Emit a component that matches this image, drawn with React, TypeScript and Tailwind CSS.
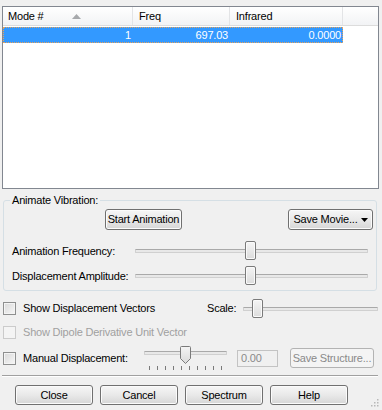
const font = "font-['Liberation_Sans',Arial,sans-serif]";

const btn =
  'flex items-center justify-center rounded-[3px] border border-[#707070] bg-linear-to-b from-[#f6f6f6] via-[#e9e9e9] to-[#d6d6d6] shadow-[inset_0_0_0_1px_#fbfbfb] text-black';
const btnDisabled =
  'flex items-center justify-center rounded-[3px] border border-[#b3b3b3] bg-[#f4f4f4] text-[#8a8a8a]';

const Checkbox = ({ disabled }: { disabled?: boolean }) => (
  <div
    className={
      disabled
        ? 'w-[13px] h-[13px] shrink-0 border border-[#cbcbcb] bg-[#f4f4f4]'
        : 'w-[13px] h-[13px] shrink-0 border border-[#8e8f8f] bg-linear-to-br from-[#d9d9d9] to-[#f7f7f7] shadow-[inset_0_0_0_1px_#f4f4f4]'
    }
  />
);

const Thumb = () => (
  <div className="absolute top-0 w-[11px] h-[19px] rounded-[2px] border border-[#7a7a7a] bg-linear-to-b from-[#f5f5f5] to-[#dcdcdc] shadow-[inset_0_0_0_1px_#fafafa]" />
);

const Track = () => (
  <div className="absolute left-0 right-0 top-[8px] h-[4px] border border-[#d0d0d0] border-t-[#a9a9a9] bg-[#e8e8e8] rounded-[1px]" />
);

const Slider = ({ width, thumb }: { width: number; thumb: number }) => (
  <div className="relative h-[19px] shrink-0" style={{ width }}>
    <Track />
    <div className="absolute top-0" style={{ left: thumb }}>
      <Thumb />
    </div>
  </div>
);

export default function App() {
  return (
    <div className={`relative w-[382px] h-[410px] bg-[#f0f0f0] flex flex-col text-[11px] leading-[13px] tracking-[-0.2px] text-black overflow-hidden ${font}`}>
      {/* Modes list */}
      <div className="ml-[2px] mt-[6px] w-[377px] h-[183px] shrink-0 border border-[#828790] bg-white flex flex-col">
        <div className="h-[19px] flex border-b border-[#dcdcdc] bg-linear-to-b from-white to-[#f2f3f5]">
          <div className="w-[130px] border-r border-[#e3e4e6] flex items-center pl-[5px]">
            <span>Mode #</span>
            <svg className="ml-[28px]" width="9" height="5" viewBox="0 0 9 5">
              <path d="M0 5 L4.5 0 L9 5 Z" fill="#a7a9ac" />
            </svg>
          </div>
          <div className="w-[97px] border-r border-[#e3e4e6] flex items-center pl-[6px]">Freq</div>
          <div className="w-[113px] border-r border-[#e3e4e6] flex items-center pl-[6px]">Infrared</div>
          <div className="flex-1" />
        </div>
        <div className="mt-[1px] h-[16px] w-[340px] bg-[#3399ff] text-white flex items-center border border-dotted border-[#e8a25a]">
          <div className="w-[129px] text-right pr-[2px]">1</div>
          <div className="w-[97px] text-right pr-[2px]">697.03</div>
          <div className="w-[112px] text-right pr-[1px]">0.0000</div>
        </div>
      </div>

      {/* Animate Vibration group */}
      <div className="relative ml-[3px] mt-[11px] w-[374px] h-[91px] shrink-0 border border-[#d5dfe5] rounded-[3px] flex flex-col">
        <span className="absolute -top-[7px] left-[6px] px-[2px] bg-[#f0f0f0]">Animate Vibration:</span>
        <div className="mt-[8px] h-[21px] flex">
          <div className={`${btn} ml-[101px] w-[77px]`}>Start Animation</div>
          <div className={`${btn} ml-auto mr-[3px] w-[85px] gap-[3px]`}>
            <span>Save Movie...</span>
            <svg width="7" height="4" viewBox="0 0 7 4">
              <path d="M0 0 L7 0 L3.5 4 Z" fill="#000" />
            </svg>
          </div>
        </div>
        <div className="mt-[11px] h-[19px] flex items-center">
          <span className="w-[131px] pl-[8px] pt-[1px]">Animation Frequency:</span>
          <Slider width={233} thumb={110} />
        </div>
        <div className="mt-[6px] h-[19px] flex items-center">
          <span className="w-[131px] pl-[8px] pt-[1px]">Displacement Amplitude:</span>
          <Slider width={233} thumb={110} />
        </div>
      </div>

      {/* Options */}
      <div className="mt-[8px] h-[19px] flex items-center">
        <div className="ml-[3px]">
          <Checkbox />
        </div>
        <span className="ml-[7px] w-[184px]">Show Displacement Vectors</span>
        <span className="w-[36px]">Scale:</span>
        <Slider width={135} thumb={9} />
      </div>

      <div className="mt-[8px] h-[13px] flex items-center">
        <div className="ml-[3px]">
          <Checkbox disabled />
        </div>
        <span className="ml-[7px] text-[#a0a0a0]">Show Dipole Derivative Unit Vector</span>
      </div>

      <div className="mt-[7px] h-[26px] flex items-start">
        <div className="ml-[3px] mt-[6px]">
          <Checkbox />
        </div>
        <span className="ml-[7px] mt-[6px] w-[121px]">Manual Displacement:</span>
        <div className="relative w-[83px] h-[26px] shrink-0">
          <div className="absolute left-0 right-0 top-[5px] h-[4px] border border-[#d0d0d0] border-t-[#a9a9a9] bg-[#e8e8e8] rounded-[1px]" />
          <svg className="absolute top-0 left-[36px]" width="11" height="18" viewBox="0 0 11 18">
            <defs>
              <linearGradient id="tg" x1="0" y1="0" x2="0" y2="1">
                <stop offset="0" stopColor="#f5f5f5" />
                <stop offset="1" stopColor="#dadada" />
              </linearGradient>
            </defs>
            <path d="M0.5 1.5 Q0.5 0.5 1.5 0.5 L9.5 0.5 Q10.5 0.5 10.5 1.5 L10.5 12.5 L5.5 17.5 L0.5 12.5 Z" fill="url(#tg)" stroke="#7a7a7a" />
          </svg>
          <div className="absolute left-[5px] top-[20px] flex gap-[7px]">
            {Array.from({ length: 10 }).map((_, i) => (
              <div key={i} className="w-px h-[4px] bg-[#7a7a7a]" />
            ))}
          </div>
        </div>
        <div className="ml-[10px] mt-[4px] w-[41px] h-[17px] border border-[#c3c3c3] bg-[#f0f0f0] text-[#8a8a8a] flex items-center pl-[3px]">
          0.00
        </div>
        <div className={`${btnDisabled} ml-[12px] mt-[2px] w-[84px] h-[20px]`}>Save Structure...</div>
      </div>

      <div className="mt-[3px] ml-[2px] w-[376px] h-[2px] border-t border-[#a0a0a0] border-b border-b-white" />

      <div className="mt-[8px] ml-[15px] flex gap-[7px]">
        <div className={`${btn} w-[78px] h-[20px]`}>Close</div>
        <div className={`${btn} w-[78px] h-[20px]`}>Cancel</div>
        <div className={`${btn} w-[78px] h-[20px]`}>Spectrum</div>
        <div className={`${btn} w-[78px] h-[20px]`}>Help</div>
      </div>

      {/* size grip */}
      <svg className="absolute right-[3px] bottom-[3px]" width="10" height="10" viewBox="0 0 10 10">
        {[
          [8, 2],
          [8, 5],
          [5, 5],
          [8, 8],
          [5, 8],
          [2, 8],
        ].map(([x, y], i) => (
          <rect key={i} x={x} y={y} width="1.5" height="1.5" fill="#b8b8b8" />
        ))}
      </svg>
    </div>
  );
}
